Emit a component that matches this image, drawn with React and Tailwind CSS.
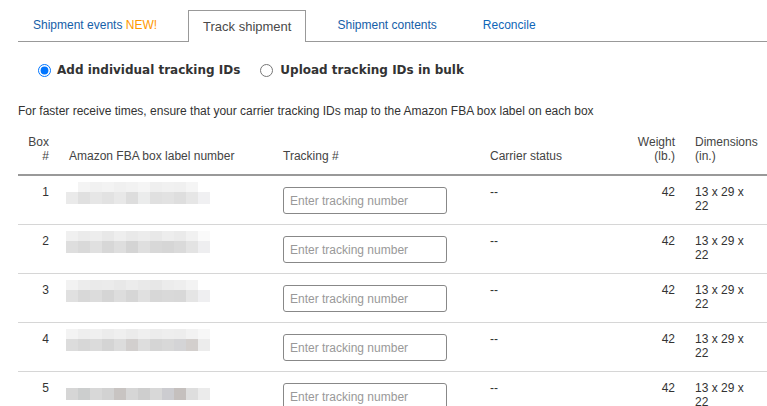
import React from "react";

const blurs = [
  {
    top: ["bg-[#ffffff]", "bg-[#f4f4f4]", "bg-[#f1f1f1]", "bg-[#f3f3f3]", "bg-[#f0f0f0]", "bg-[#f2f2f2]", "bg-[#f5f5f5]", "bg-[#efefef]", "bg-[#f1f1f1]", "bg-[#f0f0f0]", "bg-[#f5f5f5]", "bg-[#ffffff]"],
    bottom: ["bg-[#eaeaea]", "bg-[#e0e0e0]", "bg-[#e6e6e6]", "bg-[#e2e2e2]", "bg-[#e8e8e8]", "bg-[#dddddd]", "bg-[#ebecec]", "bg-[#e0e0e0]", "bg-[#e2e2e2]", "bg-[#dedede]", "bg-[#e6e6e6]", "bg-[#f0f0f2]"],
  },
  {
    top: ["bg-[#f0f0f0]", "bg-[#ebebeb]", "bg-[#ededed]", "bg-[#e8e8e8]", "bg-[#eeeeee]", "bg-[#e9e9e9]", "bg-[#ececec]", "bg-[#e8e8e8]", "bg-[#ededed]", "bg-[#eaeaea]", "bg-[#f1f1f1]", "bg-[#fafafa]"],
    bottom: ["bg-[#dedede]", "bg-[#d9d9d9]", "bg-[#e0e0e0]", "bg-[#d7d7d7]", "bg-[#dedede]", "bg-[#d4d4d4]", "bg-[#dfdfdf]", "bg-[#d8d8d8]", "bg-[#d6d6d6]", "bg-[#dadada]", "bg-[#e3e3e3]", "bg-[#eeeef0]"],
  },
  {
    top: ["bg-[#f2f2f2]", "bg-[#ececec]", "bg-[#eaeaea]", "bg-[#ebebeb]", "bg-[#e8e8e8]", "bg-[#ececec]", "bg-[#e9e9e9]", "bg-[#e7e7e7]", "bg-[#ececec]", "bg-[#eeeeee]", "bg-[#f3f3f3]", "bg-[#ffffff]"],
    bottom: ["bg-[#e0e0e0]", "bg-[#d8d8d8]", "bg-[#dcdcdc]", "bg-[#d5d5d5]", "bg-[#dddddd]", "bg-[#d6d6d6]", "bg-[#e0e0e0]", "bg-[#d7d7d7]", "bg-[#d9d9d9]", "bg-[#d8d8d8]", "bg-[#e5e5e5]", "bg-[#efeff1]"],
  },
  {
    top: ["bg-[#f3f3f3]", "bg-[#eeeeee]", "bg-[#f0f0f0]", "bg-[#ececec]", "bg-[#efefef]", "bg-[#ebebeb]", "bg-[#efefef]", "bg-[#ececec]", "bg-[#eeeeee]", "bg-[#ededed]", "bg-[#f2f2f2]", "bg-[#f7f7f7]"],
    bottom: ["bg-[#dcdcdc]", "bg-[#d7d7d7]", "bg-[#dbdbdb]", "bg-[#d4d4d4]", "bg-[#dcdcdc]", "bg-[#d2cfce]", "bg-[#dddddd]", "bg-[#d5d5d5]", "bg-[#d8d8d8]", "bg-[#d4d4d6]", "bg-[#d3cfcd]", "bg-[#ececec]"],
  },
  {
    top: ["bg-[#ffffff]", "bg-[#ffffff]", "bg-[#ffffff]", "bg-[#ffffff]", "bg-[#ffffff]", "bg-[#ffffff]", "bg-[#ffffff]", "bg-[#ffffff]", "bg-[#ffffff]", "bg-[#ffffff]", "bg-[#ffffff]", "bg-[#ffffff]"],
    bottom: ["bg-[#d6d6d6]", "bg-[#cccece]", "bg-[#d8d8d8]", "bg-[#d2d2d2]", "bg-[#c8c4c2]", "bg-[#d6d6d6]", "bg-[#cecece]", "bg-[#d8d8d8]", "bg-[#ccccd0]", "bg-[#c5c0be]", "bg-[#dedede]", "bg-[#ebebeb]"],
  },
];

function Blur({ data }) {
  return (
    <div className="flex flex-col w-[144px]">
      <div className="flex h-[10px]">
        {data.top.map((c, i) => (
          <div key={i} className={"w-[12px] h-full " + c} />
        ))}
      </div>
      <div className="flex h-[12px]">
        {data.bottom.map((c, i) => (
          <div key={i} className={"w-[12px] h-full " + c} />
        ))}
      </div>
    </div>
  );
}

const cols = "grid grid-cols-[41px_214px_207px_148px_57px_82px]";

export default function App() {
  return (
    <div className="w-[767px] h-[406px] overflow-hidden bg-white font-['Liberation_Sans',Arial,sans-serif] text-[#333]">
      {/* Tabs */}
      <div className="pt-[10px]">
        <div className="ml-[18px] flex gap-[16px] h-[32px] border-b border-[#999] text-[12px] leading-[15px]">
          <div className="px-[15px] flex items-center text-[#1560a8]">
            Shipment events&nbsp;<span className="text-[#ff9900]">NEW!</span>
          </div>
          <div className="px-[14px] h-[32px] -mb-px flex items-center bg-white border border-b-0 border-[#999] text-[13px] text-[#4a4a4a]">
            Track shipment
          </div>
          <div className="px-[15px] flex items-center text-[#1560a8]">Shipment contents</div>
          <div className="px-[15px] flex items-center text-[#0f66b8]">Reconcile</div>
        </div>
      </div>

      {/* Radios */}
      <div className="mt-[18px] h-[20px] pl-[38px] flex items-center gap-[20px] font-['DejaVu_Sans',Verdana,sans-serif] font-bold text-[12px] text-[#333]">
        <label className="flex items-center gap-[6px]">
          <input type="radio" name="mode" defaultChecked className="m-0 w-[13px] h-[13px]" />
          <span>Add individual tracking IDs</span>
        </label>
        <label className="flex items-center gap-[7px]">
          <input type="radio" name="mode" className="m-0 w-[13px] h-[13px]" />
          <span>Upload tracking IDs in bulk</span>
        </label>
      </div>

      {/* Info */}
      <p className="mt-[24px] pl-[18px] text-[12px] leading-[14px] text-[#333]">
        For faster receive times, ensure that your carrier tracking IDs map to the Amazon FBA box label on each box
      </p>

      {/* Table */}
      <div className="mt-[17px] ml-[18px] text-[12px] leading-[14px]">
        <div className={cols + " items-end pb-[11px] border-b-2 border-[#999] text-[#444]"}>
          <div className="text-right pr-[10px]">
            <div>Box</div>
            <div>#</div>
          </div>
          <div className="pl-[10px]">Amazon FBA box label number</div>
          <div className="pl-[10px]">Tracking #</div>
          <div className="pl-[10px]">Carrier status</div>
          <div className="text-right pr-[10px]">Weight (lb.)</div>
          <div className="pl-[10px] pr-[8px]">Dimensions (in.)</div>
        </div>

        {[1, 2, 3, 4, 5].map((n, i) => (
          <div key={n} className={cols + " h-[49px] border-b border-[#d6d6d6] text-[#333]"}>
            <div className="pt-[9px] text-right pr-[10px]">{n}</div>
            <div className="pt-[6px] pl-[7px]">
              <Blur data={blurs[i]} />
            </div>
            <div className="pt-[11px] pl-[10px]">
              <input
                type="text"
                placeholder="Enter tracking number"
                className="block w-[164px] h-[27px] border border-[#888] rounded-[3px] px-[6px] text-[12px] text-[#333] placeholder:text-[#999] outline-none font-['Liberation_Sans',Arial,sans-serif]"
              />
            </div>
            <div className="pt-[9px] pl-[10px]">--</div>
            <div className="pt-[9px] text-right pr-[10px]">42</div>
            <div className="pt-[9px] pl-[10px] pr-[8px]">13 x 29 x 22</div>
          </div>
        ))}
      </div>
    </div>
  );
}
